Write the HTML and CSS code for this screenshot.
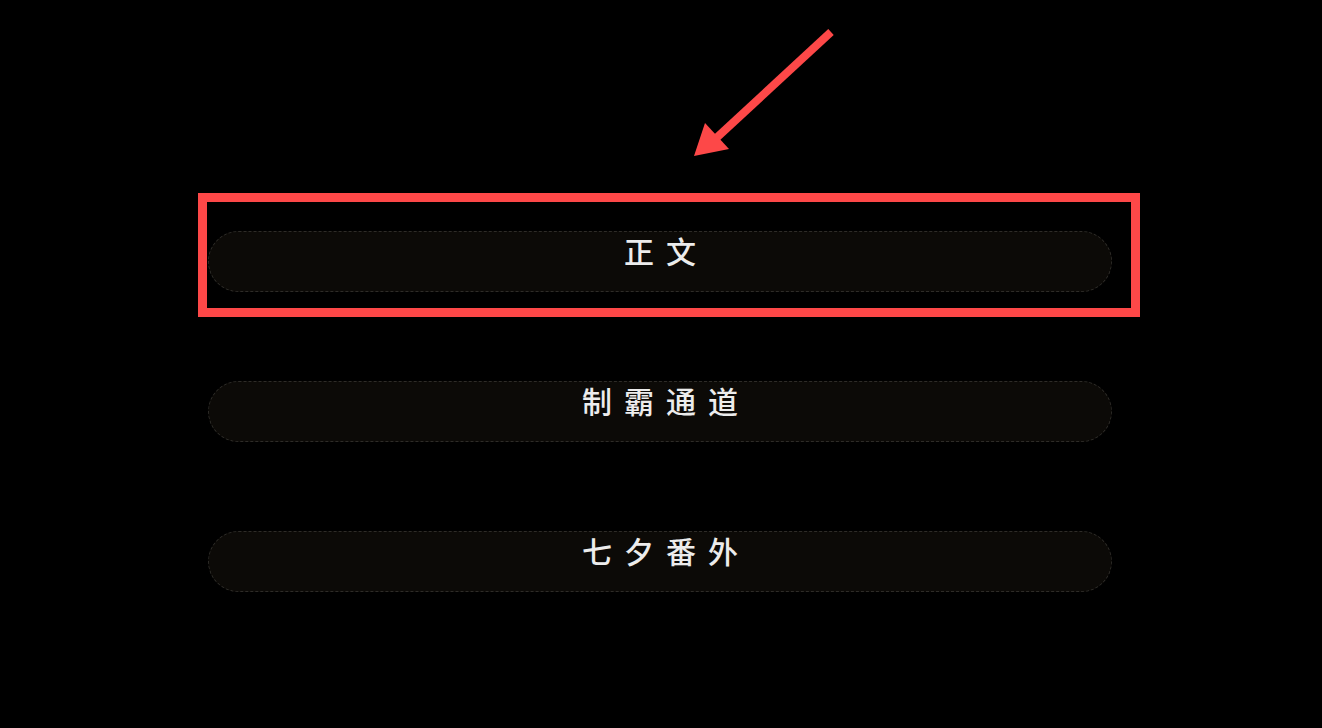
FILE: index.html
```html
<!DOCTYPE html>
<html lang="zh">
<head>
<meta charset="utf-8">
<title>章节</title>
<link rel="stylesheet" href="styles.css">
</head>
<body>
<div class="page">
  <div class="list">
    <div class="pill">正文</div>
    <div class="pill">制霸通道</div>
    <div class="pill">七夕番外</div>
  </div>
  <div class="highlight"></div>
  <svg class="arrow" width="1322" height="728" viewBox="0 0 1322 728">
    <line x1="831" y1="32" x2="712" y2="142" stroke="#fd4848" stroke-width="8" stroke-linecap="butt"/>
    <polygon points="694,156 705,123 729,149" fill="#fd4848"/>
  </svg>
</div>
</body>
</html>
```
FILE: styles.css
```css
html, body {
  margin: 0;
  padding: 0;
  background: #000;
}
.page {
  position: relative;
  width: 1322px;
  height: 728px;
  overflow: hidden;
  background: #000;
  font-family: "Noto Sans CJK SC", "Noto Sans", sans-serif;
}
.list {
  display: flex;
  flex-direction: column;
  gap: 89px;
  padding-top: 231px;
  padding-left: 208px;
  width: 904px;
}
.pill {
  box-sizing: border-box;
  height: 61px;
  border: 1px dashed #2e2c28;
  border-radius: 31px;
  background: #0c0a07;
  color: #ececec;
  font-size: 30px;
  font-weight: 500;
  line-height: 37px;
  letter-spacing: 12px;
  padding-left: 12px;
  text-align: center;
}
.highlight {
  position: absolute;
  left: 198px;
  top: 193px;
  width: 942px;
  height: 124px;
  box-sizing: border-box;
  border: 9px solid #fd4848;
}
.arrow {
  position: absolute;
  left: 0;
  top: 0;
}
```
